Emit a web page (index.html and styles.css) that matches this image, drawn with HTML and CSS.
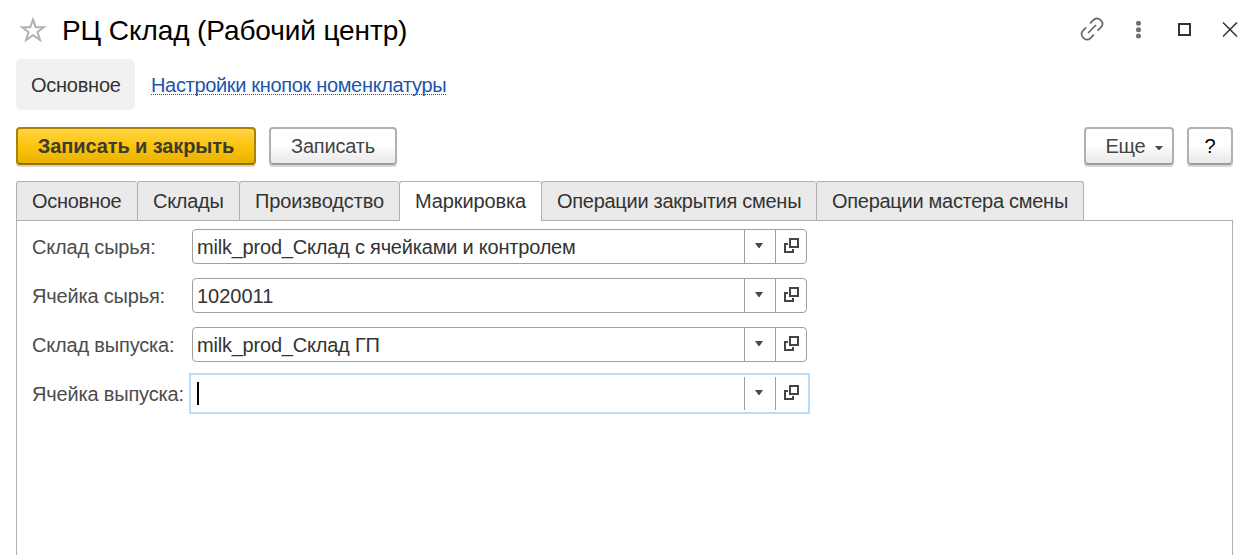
FILE: index.html
```
<!DOCTYPE html>
<html lang="ru">
<head>
<meta charset="utf-8">
<title>РЦ Склад (Рабочий центр)</title>
<link rel="stylesheet" href="styles.css">
</head>
<body>
<svg class="defs" width="0" height="0">
  <symbol id="open" viewBox="0 0 15 15"><path d="M6 1H14V9H6ZM4 6H1V14H9V11" fill="none" stroke="#444" stroke-width="2"/></symbol>
  <symbol id="arrow" viewBox="0 0 8 5"><path d="M0 0H8L4.500 5H3.500Z" fill="#4a4a4a"/></symbol>
</svg>
<header class="titlebar">
  <svg class="star" width="28" height="28" viewBox="0 0 28 28"><path d="M14 3.500L16.700 11.200H24.800L18.500 16L21 24L14 19.200L7 24L9.500 16L3.200 11.200H11.300Z" fill="none" stroke="#abb2b9" stroke-width="2"/></svg>
  <h1 class="title">РЦ Склад (Рабочий центр)</h1>
  <div class="window-tools">
    <svg width="24" height="24" viewBox="0 0 24 24"><g fill="none" stroke="#666" stroke-width="1.700" stroke-linecap="round"><path d="M8.500 15.500L15.500 8.500M10.600 5.800L13.100 3.200C15.200 1.100 18.200 .7 20.700 3.100C23.100 5.600 22.800 8.500 20.700 10.600L18 13.200M13.400 18.100L10.800 20.800C8.700 22.900 5.700 23.300 3.300 20.900C.8 18.500 1.100 15.400 3.200 13.300L5.700 10.800"/></g></svg>
    <svg width="6" height="18" viewBox="0 0 6 18"><g fill="#707070"><circle cx="2.500" cy="2.300" r="2.500"/><circle cx="2.500" cy="8.700" r="2.500"/><circle cx="2.500" cy="15" r="2.500"/></g></svg>
    <svg width="13" height="13" viewBox="0 0 13 13"><path d="M1 1H12V12H1Z" fill="none" stroke="#333" stroke-width="2"/></svg>
    <svg width="16" height="16" viewBox="0 0 16 16"><path d="M1 .5L15 14.500M15 .5L1 14.500" stroke="#333" stroke-width="1.500"/></svg>
  </div>
</header>
<nav class="nav">
  <span class="nav-current">Основное</span>
  <a class="nav-link">Настройки кнопок номенклатуры</a>
</nav>
<div class="commands">
  <button class="btn primary"><span>Записать и закрыть</span></button>
  <button class="btn save"><span>Записать</span></button>
  <button class="btn more"><span>Еще</span><svg width="8" height="4" viewBox="0 0 8 5" preserveAspectRatio="none"><use href="#arrow"/></svg></button>
  <button class="btn help">?</button>
</div>
<div class="tabs">
  <div class="tab w1"><span>Основное</span></div>
  <div class="tab w2"><span>Склады</span></div>
  <div class="tab w3"><span>Производство</span></div>
  <div class="tab w4 active"><span>Маркировка</span></div>
  <div class="tab w5"><span>Операции закрытия смены</span></div>
  <div class="tab w6"><span>Операции мастера смены</span></div>
</div>
<main class="panel">
  <div class="row"><label class="label">Склад сырья:</label><div class="field"><div class="value"><span>milk_prod_Склад с ячейками и контролем</span></div><div class="drop"><svg width="8" height="5"><use href="#arrow"/></svg></div><div class="open"><svg width="15" height="15"><use href="#open"/></svg></div></div></div>
  <div class="row"><label class="label">Ячейка сырья:</label><div class="field"><div class="value number"><span>1020011</span></div><div class="drop"><svg width="8" height="5"><use href="#arrow"/></svg></div><div class="open"><svg width="15" height="15"><use href="#open"/></svg></div></div></div>
  <div class="row"><label class="label">Склад выпуска:</label><div class="field"><div class="value"><span>milk_prod_Склад ГП</span></div><div class="drop"><svg width="8" height="5"><use href="#arrow"/></svg></div><div class="open"><svg width="15" height="15"><use href="#open"/></svg></div></div></div>
  <div class="row"><label class="label">Ячейка выпуска:</label><div class="field focused"><div class="value"><i class="caret"></i></div><div class="drop"><svg width="8" height="5"><use href="#arrow"/></svg></div><div class="open"><svg width="15" height="15"><use href="#open"/></svg></div></div></div>
</main>
</body>
</html>
```
FILE: styles.css
```
* { box-sizing: border-box; }
body { margin: 0; height: 555px; overflow: hidden; background: #fff; color: #333; font: 20px/24px "Liberation Sans", Arial, sans-serif; display: flex; flex-direction: column; }
svg { display: block; flex: none; }
.defs { position: absolute; }
.titlebar { height: 59px; flex: none; display: flex; align-items: center; padding: 0 19px 0 19px; }
.title { margin: 2px 0 0 15px; font-size: 28px; line-height: 34px; font-weight: 400; color: #000; white-space: nowrap; letter-spacing: -.1px; }
.window-tools { margin-left: auto; display: flex; align-items: center; }
.window-tools svg:nth-child(1) { margin-top: -2px; }
.window-tools svg:nth-child(2) { margin-left: 32px; }
.window-tools svg:nth-child(3) { margin-left: 36px; }
.window-tools svg:nth-child(4) { margin-left: 31px; }
.nav { height: 51px; flex: none; display: flex; align-items: center; padding-left: 16px; gap: 16px; white-space: nowrap; letter-spacing: -.33px; }
.nav-current { width: 119px; height: 51px; border-radius: 5px; background: #f1f1f1; display: flex; align-items: center; padding-left: 15px; letter-spacing: -.25px; }
.nav-link { color: #1c55ae; border-bottom: 1px dotted #1c55ae; line-height: 17px; padding-top: 3px; }
.commands { display: flex; flex: none; margin: 17px 24px 0 16px; height: 38px; }
.btn { font: inherit; height: 38px; padding: 0; display: flex; align-items: center; justify-content: center; border: 2px solid #b0b0b0; border-bottom-color: #9c9c9c; border-radius: 4px; background: linear-gradient(#fff 45%, #e8e8e8); color: #444; box-shadow: 0 2px 0 #d6d6d6; white-space: nowrap; }
.primary { width: 240px; font-weight: 700; color: #3b3b32; border-color: #a88209; border-bottom-color: #957200; background: linear-gradient(#ffd445, #fbc40a 50%, #e9b100); letter-spacing: -.1px; }
.save { width: 128px; margin-left: 13px; letter-spacing: -.2px; }
.more { width: 90px; margin-left: auto; gap: 9px; padding-left: 10px; letter-spacing: -.2px; }
.more svg { margin-top: 4px; }
.help { width: 46px; margin-left: 13px; color: #000; }
.tabs { display: flex; flex: none; margin: 16px 0 0 16px; height: 39px; letter-spacing: -.28px; }
.tab { border: 1px solid #b0b0b0; border-right: 0; border-bottom: 0; border-radius: 3px 3px 0 0; background: #eaeaea; padding: 7px 0 0 15px; white-space: nowrap; }
.active { background: #fff; height: 40px; z-index: 1; }
.w1 { width: 121px; }
.w2 { width: 102px; }
.w3 { width: 160px; letter-spacing: -.12px; }
.w4 { width: 142px; letter-spacing: -.12px; }
.w5 { width: 275px; }
.w6 { width: 268px; border-right: 1px solid #b0b0b0; }
.panel { flex: 1; margin: 0 24px 0 16px; border: 1px solid #b0b0b0; border-bottom: 0; padding: 8px 0 0 15px; display: flex; flex-direction: column; gap: 14px; }
.row { display: flex; height: 35px; align-items: center; }
.label { width: 160px; color: #4c4c4c; white-space: nowrap; letter-spacing: -.18px; }
.field { width: 615px; height: 35px; display: flex; border: 1px solid #a0a0a0; border-radius: 4px; flex: none; }
.value { width: 551px; padding-left: 4px; display: flex; align-items: center; white-space: nowrap; letter-spacing: -.21px; }
.number { letter-spacing: 0; }
.drop, .open { border-left: 1px solid #a0a0a0; display: flex; align-items: center; justify-content: center; }
.drop { width: 31px; padding: 0 2px 2px 0; }
.open { width: 31px; padding: 0 0 2px 1px; }
.focused { width: 621px; height: 41px; margin: -3px; border: 2px solid #b9dcf8; border-radius: 0; padding: 2px 1px 2px 2px; }
.caret { width: 2px; height: 23px; background: #000; }
```
